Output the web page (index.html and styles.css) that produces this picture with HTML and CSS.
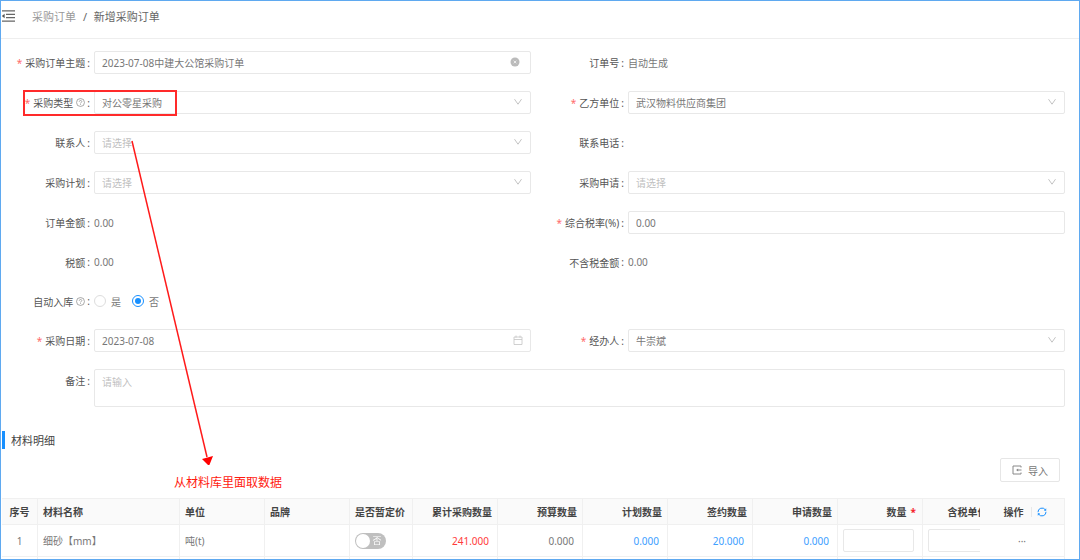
FILE: index.html
```html
<!DOCTYPE html>
<html lang="zh-CN">

<head>
    <meta charset="UTF-8">
    <meta name="viewport" content="width=device-width, initial-scale=1.0">
    <title>新增采购订单</title>
    <link rel="stylesheet" href="styles.css">
</head>

<body>
    <svg class="sprite" aria-hidden="true">
        <symbol id="icon-down" viewBox="0 0 10 10">
            <path d="M1.5 2.2 5 7.2 8.5 2.2" fill="none" stroke="currentColor" />
        </symbol>
        <symbol id="icon-help" viewBox="0 0 10 10">
            <circle cx="5" cy="5" r="4.4" fill="none" stroke="currentColor" stroke-width=".8" />
            <path d="M3.6 4.1C3.6 2.2 6.4 2.2 6.4 4 6.4 5 5 5 5 6.1M5 6.9v.9" fill="none" stroke="currentColor" stroke-width=".8" />
        </symbol>
    </svg>

    <div class="app">
        <header class="topbar">
            <button class="menu-toggle" aria-label="收起菜单">
                <svg viewBox="0 0 14 12" width="14" height="12">
                    <path d="M1 .8h13M5 4.3h9M5 7.7h9M1 11.2h13" stroke="#666" stroke-width="1.2" />
                    <path d="M3.6 3.8v4.4L.8 6z" fill="#555" />
                </svg>
            </button>
            <nav class="breadcrumb">
                <a href="#">采购订单</a>
                <span class="sep">/</span>
                <span>新增采购订单</span>
            </nav>
        </header>

        <form class="order-form">
            <div class="field">
                <label class="required" for="title">采购订单主题</label>
                <div class="control">
                    <input type="text" id="title" value="2023-07-08中建大公馆采购订单">
                    <svg class="suffix clear" viewBox="0 0 10 10">
                        <circle cx="5" cy="5" r="4.5" fill="#bbb" />
                        <path d="M3.7 3.7l2.6 2.6M6.3 3.7 3.7 6.3" stroke="#fff" stroke-width=".7" />
                    </svg>
                </div>
            </div>
            <div class="field">
                <span class="label">订单号</span>
                <span class="value">自动生成</span>
            </div>

            <div class="field">
                <label class="required" for="type">采购类型<svg class="help"><use href="#icon-help" /></svg></label>
                <div class="control">
                    <select id="type"><option>对公零星采购</option></select>
                    <svg class="suffix"><use href="#icon-down" /></svg>
                </div>
                <div class="mark-box"></div>
            </div>
            <div class="field">
                <label class="required" for="supplier">乙方单位</label>
                <div class="control">
                    <select id="supplier"><option>武汉物料供应商集团</option></select>
                    <svg class="suffix"><use href="#icon-down" /></svg>
                </div>
            </div>

            <div class="field">
                <label for="contact">联系人</label>
                <div class="control">
                    <select id="contact" class="empty"><option>请选择</option></select>
                    <svg class="suffix"><use href="#icon-down" /></svg>
                </div>
            </div>
            <div class="field">
                <span class="label">联系电话</span>
                <span class="value"></span>
            </div>

            <div class="field">
                <label for="plan">采购计划</label>
                <div class="control">
                    <select id="plan" class="empty"><option>请选择</option></select>
                    <svg class="suffix"><use href="#icon-down" /></svg>
                </div>
            </div>
            <div class="field">
                <label for="apply">采购申请</label>
                <div class="control">
                    <select id="apply" class="empty"><option>请选择</option></select>
                    <svg class="suffix"><use href="#icon-down" /></svg>
                </div>
            </div>

            <div class="field">
                <span class="label">订单金额</span>
                <span class="value">0.00</span>
            </div>
            <div class="field">
                <label class="required" for="rate">综合税率(%)</label>
                <div class="control">
                    <input type="text" id="rate" value="0.00">
                </div>
            </div>

            <div class="field">
                <span class="label">税额</span>
                <span class="value">0.00</span>
            </div>
            <div class="field">
                <span class="label">不含税金额</span>
                <span class="value">0.00</span>
            </div>

            <div class="field" role="radiogroup" aria-labelledby="auto-label">
                <span class="label" id="auto-label">自动入库<svg class="help"><use href="#icon-help" /></svg></span>
                <label class="radio"><input type="radio" name="auto">是</label>
                <label class="radio"><input type="radio" name="auto" checked>否</label>
            </div>

            <div class="field new-row">
                <label class="required" for="date">采购日期</label>
                <div class="control">
                    <input type="text" id="date" value="2023-07-08">
                    <svg class="suffix" viewBox="0 0 10 10">
                        <path d="M1 2h8v7.5H1zM1 4.5h8M3 .5v2.2M7 .5v2.2" fill="none" stroke="currentColor" stroke-width=".8" />
                    </svg>
                </div>
            </div>
            <div class="field">
                <label class="required" for="operator">经办人</label>
                <div class="control">
                    <select id="operator"><option>牛崇斌</option></select>
                    <svg class="suffix"><use href="#icon-down" /></svg>
                </div>
            </div>

            <div class="field full">
                <label for="remark">备注</label>
                <div class="control">
                    <textarea id="remark" placeholder="请输入"></textarea>
                </div>
            </div>
        </form>

        <h2 class="section-title">材料明细</h2>

        <div class="toolbar">
            <button class="import">
                <svg viewBox="0 0 10 10" width="10" height="10">
                    <path d="M9 2.5V1H1v8h8V7.5M9.500 5H5" fill="none" stroke="#888" />
                    <path d="M6.200 3.500v3L4 5z" fill="#888" />
                </svg>
                导入
            </button>
        </div>

        <div class="table-wrap">
            <table>
                <colgroup>
                    <col class="w-index">
                    <col class="w-name">
                    <col class="w-base">
                    <col class="w-base">
                    <col class="w-switch">
                    <col class="w-base">
                    <col class="w-base">
                    <col class="w-base">
                    <col class="w-base">
                    <col class="w-base">
                    <col class="w-base">
                    <col class="w-price">
                    <col class="w-base">
                </colgroup>
                <thead>
                    <tr>
                        <th class="center">序号</th>
                        <th>材料名称</th>
                        <th>单位</th>
                        <th>品牌</th>
                        <th>是否暂定价</th>
                        <th class="num">累计采购数量</th>
                        <th class="num">预算数量</th>
                        <th class="num">计划数量</th>
                        <th class="num">签约数量</th>
                        <th class="num">申请数量</th>
                        <th class="num">数量<span class="star">*</span></th>
                        <th class="num">含税单价<span class="star">*</span></th>
                        <th class="fixed">
                            <div class="action-head">
                                操作
                                <button class="refresh" aria-label="刷新">
                                    <svg viewBox="0 0 10 10" width="10" height="10">
                                        <path d="M1 5.2A4 4 0 0 1 8.3 2.800M9 4.800A4 4 0 0 1 1.700 7.200" fill="none" stroke="#1890ff" />
                                        <path d="M9.200 1.300v2.400H6.900zM.8 8.700V6.300h2.300z" fill="#1890ff" />
                                    </svg>
                                </button>
                            </div>
                        </th>
                    </tr>
                </thead>
                <tbody>
                    <tr>
                        <td class="center">1</td>
                        <td>细砂【mm】</td>
                        <td>吨(t)</td>
                        <td></td>
                        <td><button class="switch" role="switch" aria-checked="false" aria-label="是否暂定价">否</button></td>
                        <td class="num red">241.000</td>
                        <td class="num">0.000</td>
                        <td class="num blue">0.000</td>
                        <td class="num blue">20.000</td>
                        <td class="num blue">0.000</td>
                        <td><input type="text" aria-label="数量"></td>
                        <td><input type="text" aria-label="含税单价"></td>
                        <td class="fixed center">···</td>
                    </tr>
                    <tr>
                        <td></td>
                        <td></td>
                        <td></td>
                        <td></td>
                        <td></td>
                        <td></td>
                        <td></td>
                        <td></td>
                        <td></td>
                        <td></td>
                        <td></td>
                        <td></td>
                        <td class="fixed"></td>
                    </tr>
                </tbody>
            </table>
        </div>

        <svg class="mark-arrow" viewBox="0 0 90 330" width="90" height="330">
            <path d="M7 6 82 322" stroke="#ff1a1a" stroke-width="1.5" />
            <path d="M77 324 88 321 84 331z" fill="#f00" />
        </svg>
        <p class="mark-text">从材料库里面取数据</p>
    </div>
</body>

</html>
```

FILE: styles.css
```css
* {
    box-sizing: border-box;
    margin: 0;
    padding: 0;
}

body,
input,
select,
textarea,
button {
    font-family: "Noto Sans", "Noto Sans CJK SC", sans-serif;
    font-size: 10px;
    color: #777;
}

body {
    background-color: #fff;
}

button {
    border: none;
    background: none;
    cursor: pointer;
}

.sprite {
    display: none;
}

.app {
    position: relative;
    height: 100vh;
    overflow: hidden;
    border: 1px solid #5fa9f0;
}

/* top bar */
.topbar {
    display: flex;
    align-items: center;
    height: 38px;
    padding-bottom: 8px;
    border-bottom: 1px solid #eee;
}

.menu-toggle {
    display: flex;
    width: 31px;
}

.breadcrumb {
    font-size: 11px;
    color: #666;
}

.breadcrumb a {
    color: #999;
    text-decoration: none;
}

.breadcrumb .sep {
    margin: 0 4px;
}

/* form */
.order-form {
    display: grid;
    grid-template-columns: 1fr 1fr;
    gap: 17px 4px;
    padding: 12px 14px 0 0;
}

.field {
    position: relative;
    display: flex;
    align-items: center;
    min-height: 22px;
}

.field > label:first-child,
.label {
    display: flex;
    align-items: center;
    justify-content: flex-end;
    flex: none;
    width: 93px;
    padding-right: 4px;
    color: #555;
}

.field > label:first-child::after,
.label::after {
    content: ":";
    margin-left: 2px;
}

.required::before {
    content: "*";
    margin-right: 3px;
    color: #ff6b6b;
}

.help {
    width: 9px;
    height: 9px;
    margin-left: 3px;
    color: #888;
}

.control {
    position: relative;
    flex: 1;
}

input[type="text"],
select,
textarea {
    display: block;
    width: 100%;
    height: 23px;
    padding: 0 7px;
    border: 1px solid #e8e8e8;
    border-radius: 2px;
    background-color: #fff;
    outline: none;
    appearance: none;
}

select.empty,
textarea::placeholder {
    color: #bfbfbf;
}

textarea {
    height: 38px;
    padding: 4px 7px;
    resize: none;
}

.suffix {
    position: absolute;
    top: 6px;
    right: 8px;
    width: 10px;
    height: 10px;
    color: #c4c4c4;
    pointer-events: none;
}

.suffix.clear {
    right: 11px;
}

.new-row {
    grid-column: 1;
}

.full {
    grid-column: 1 / -1;
    align-items: flex-start;
}

.full label {
    padding-top: 4px;
}

.radio {
    display: flex;
    align-items: center;
    margin-right: 11px;
}

.radio input {
    display: grid;
    place-items: center;
    width: 12px;
    height: 12px;
    margin-right: 5px;
    border: 1px solid #ddd;
    border-radius: 50%;
    appearance: none;
}

.radio input:checked {
    border-color: #1890ff;
}

.radio input:checked::before {
    content: "";
    width: 6px;
    height: 6px;
    border-radius: 50%;
    background-color: #1890ff;
}

/* materials */
.section-title {
    height: 18px;
    margin: 24px 0 0 1px;
    padding-left: 6px;
    border-left: 3px solid #1890ff;
    font-size: 11px;
    font-weight: normal;
    line-height: 20px;
    color: #444;
}

.toolbar {
    display: flex;
    justify-content: flex-end;
    padding: 9px 19px 16px 0;
}

.import {
    display: flex;
    align-items: center;
    gap: 6px;
    height: 24px;
    padding: 0 11px;
    border: 1px solid #e6e6e6;
    border-radius: 2px;
}

.table-wrap {
    margin: 0 14px 0 1px;
    overflow-x: auto;
    scrollbar-width: none;
}

table {
    width: 100%;
    min-width: 1087px;
    table-layout: fixed;
    border-collapse: separate;
    border-spacing: 0;
}

.w-index {
    width: 36px;
}

.w-name {
    width: 142px;
}

.w-base {
    width: 85px;
}

.w-switch {
    width: 63px;
}

.w-price {
    width: 81px;
}

th,
td {
    height: 32px;
    padding: 0 5px;
    border-right: 1px solid #f0f0f0;
    border-bottom: 1px solid #f0f0f0;
    background-color: #fff;
    text-align: left;
    white-space: nowrap;
}

th {
    height: 27px;
    border-top: 1px solid #f0f0f0;
    background-color: #fafafa;
    color: #444;
}

.center {
    text-align: center;
}

.num {
    text-align: right;
}

td.num {
    padding-right: 8px;
}

td input[type="text"] {
    width: 71px;
}

.red {
    color: #ff3b3b;
}

.blue {
    color: #40a0ff;
}

.star {
    margin: 0 1px 0 4px;
    color: #f5222d;
}

.fixed {
    position: sticky;
    right: 0;
}

.action-head {
    display: flex;
    align-items: center;
    justify-content: center;
    gap: 7px;
    padding-left: 6px;
}

.refresh {
    display: flex;
    padding-left: 5px;
    border-left: 1px solid #e8e8e8;
}

.switch {
    position: relative;
    display: block;
    width: 31px;
    height: 16px;
    padding-left: 13px;
    border-radius: 8px;
    background-color: #bfbfbf;
    font-size: 9px;
    line-height: 16px;
    color: #fff;
}

.switch::before {
    content: "";
    position: absolute;
    top: 1px;
    left: 1px;
    width: 14px;
    height: 14px;
    border-radius: 50%;
    background-color: #fff;
}

/* red notes over the page */
.mark-box {
    position: absolute;
    top: -1px;
    left: 22px;
    width: 154px;
    height: 26px;
    border: 2px solid #ff2a2a;
}

.mark-arrow {
    position: absolute;
    top: 134px;
    left: 124px;
    pointer-events: none;
}

.mark-text {
    position: absolute;
    top: 473px;
    left: 173px;
    font-size: 12px;
    line-height: 18px;
    color: #ff1a10;
}
```
